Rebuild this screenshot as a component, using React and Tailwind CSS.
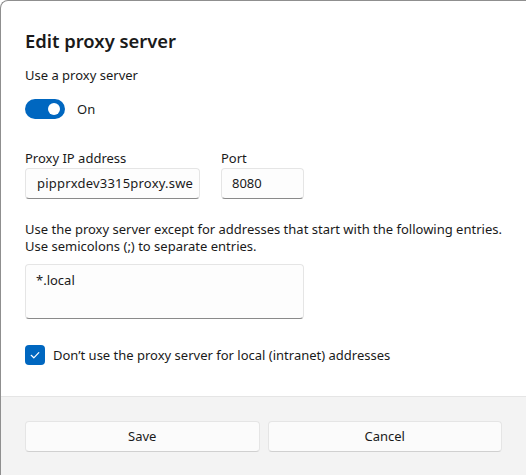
import React from "react";

function Toggle() {
  return (
    <div className="flex items-center">
      <div className="relative w-[40px] h-[20px] rounded-full bg-[#0067c0]">
        <div className="absolute left-[23px] top-[4px] w-[12px] h-[12px] rounded-full bg-white" />
      </div>
      <span className="ml-[12px] text-[13px] leading-[20px] text-[#1a1a1a]">On</span>
    </div>
  );
}

function CheckBox() {
  return (
    <div className="w-[20px] h-[20px] rounded-[4px] bg-[#0067c0] flex items-center justify-center">
      <svg width="12" height="12" viewBox="0 0 12 12" fill="none">
        <path d="M2.2 6.3 L4.8 8.8 L9.8 3.6" stroke="white" strokeWidth="1.2" strokeLinecap="round" strokeLinejoin="round" />
      </svg>
    </div>
  );
}

export default function App() {
  return (
    <div
      className="w-[526px] h-[475px] flex flex-col bg-white border-l border-t border-[#8f8f8f] rounded-tl-[8px] overflow-hidden text-[#1a1a1a]"
      style={{ fontFamily: '"Noto Sans", "Open Sans", sans-serif' }}
    >
      <div className="flex-1 pl-[24px] pt-[26px]">
        <h1 className="text-[18.4px] leading-[28px] font-semibold">Edit proxy server</h1>
        <p className="mt-[10px] text-[13px] leading-[20px]">Use a proxy server</p>
        <div className="mt-[14px]">
          <Toggle />
        </div>
        <div className="mt-[29px] flex gap-[21px]">
          <div className="flex flex-col">
            <label className="text-[13px] leading-[20px]">Proxy IP address</label>
            <div className="w-[175px] h-[31px] rounded-[4px] border border-[#e5e5e5] border-b-[#8a8a8a] bg-[#fdfdfd] overflow-hidden whitespace-nowrap pl-[11px] text-[13px] leading-[28px] tracking-[0.2px]">
              pipprxdev3315proxy.swe
            </div>
          </div>
          <div className="flex flex-col">
            <label className="text-[13px] leading-[20px]">Port</label>
            <div className="w-[83px] h-[31px] rounded-[4px] border border-[#e5e5e5] border-b-[#8a8a8a] bg-[#fdfdfd] pl-[10px] text-[13px] leading-[28px]">
              8080
            </div>
          </div>
        </div>
        <p className="mt-[22px] text-[13px] leading-[17px] whitespace-nowrap">
          Use the proxy server except for addresses that start with the following entries.
          <br />
          Use semicolons (;) to separate entries.
        </p>
        <div className="mt-[9px] w-[279px] h-[55px] rounded-[4px] border border-[#e5e5e5] border-b-[#8a8a8a] bg-[#fdfdfd] pl-[10px] pt-[5px] text-[13px] leading-[20px]">
          *.local
        </div>
        <div className="mt-[26px] flex items-center gap-[8px]">
          <CheckBox />
          <span className="text-[13px] leading-[20px]">Don’t use the proxy server for local (intranet) addresses</span>
        </div>
      </div>
      <div className="h-[79px] bg-[#f3f3f3] border-t border-[#e5e5e5] px-[24px] pt-[24px]">
        <div className="grid grid-cols-2 gap-[8px]">
          <button className="h-[31px] rounded-[4px] border border-[#e5e5e5] border-b-[#d0d0d0] bg-[#fbfbfb] text-[13px] text-[#1a1a1a]">
            Save
          </button>
          <button className="h-[31px] rounded-[4px] border border-[#e5e5e5] border-b-[#d0d0d0] bg-[#fbfbfb] text-[13px] text-[#1a1a1a]">
            Cancel
          </button>
        </div>
      </div>
    </div>
  );
}
